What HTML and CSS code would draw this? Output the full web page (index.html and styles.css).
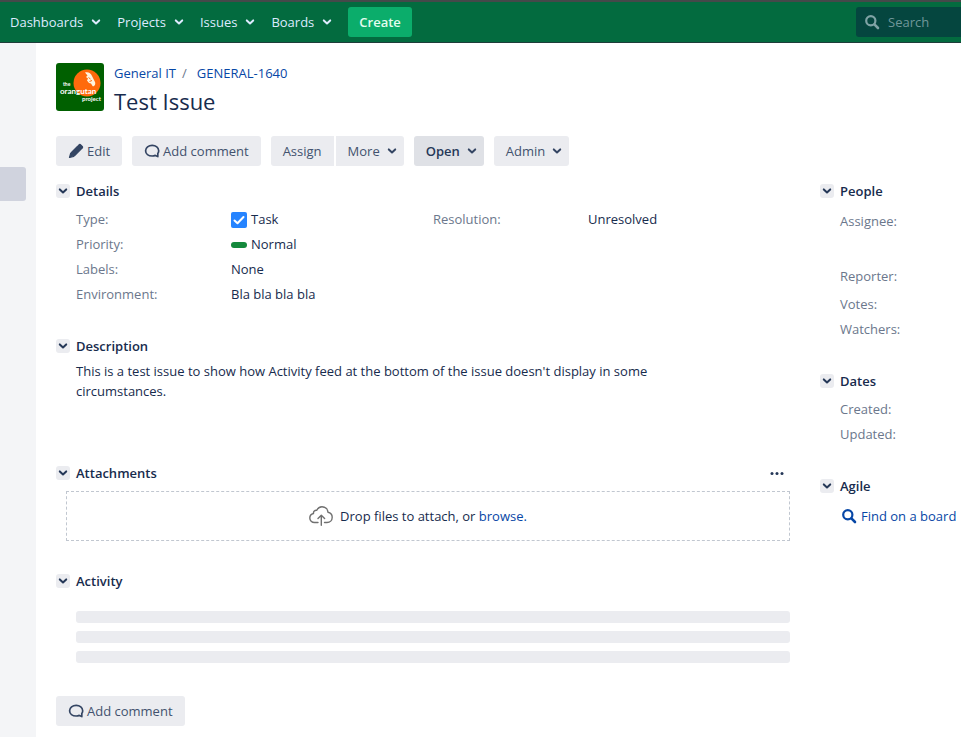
FILE: index.html
```html
<!DOCTYPE html>
<html lang="en">
<head>
  <meta charset="UTF-8">
  <meta name="viewport" content="width=device-width, initial-scale=1.0">
  <title>[GENERAL-1640] Test Issue</title>
  <link rel="stylesheet" href="styles.css">
</head>
<body>
  <!-- shared icons -->
  <svg class="sprite" aria-hidden="true">
    <symbol id="chevron" viewBox="0 0 10 8"><path d="M1.800 2.400L5 5.400L8.200 2.400" fill="none" stroke="currentColor" stroke-width="2" stroke-linecap="round" stroke-linejoin="round"/></symbol>
    <symbol id="search" viewBox="0 0 16 16"><circle cx="6.800" cy="6.800" r="4.600" fill="none" stroke="currentColor" stroke-width="2.200"/><path d="M10.400 10.400L14 14" stroke="currentColor" stroke-width="2.600" stroke-linecap="round"/></symbol>
    <symbol id="comment" viewBox="0 0 16 16"><path d="M13.800 13.600V10.400C14.400 9.600 14.700 8.700 14.700 7.700C14.700 4.500 11.800 2.300 8.200 2.300S1.600 4.500 1.600 7.700S4.500 13 8.200 13C9.300 13 10.400 12.800 11.300 12.400Z" fill="none" stroke="currentColor" stroke-width="1.700" stroke-linejoin="round"/></symbol>
  </svg>

  <header class="header">
    <nav class="nav">
      <a href="#">Dashboards <svg class="chevron"><use href="#chevron"/></svg></a>
      <a href="#">Projects <svg class="chevron"><use href="#chevron"/></svg></a>
      <a href="#">Issues <svg class="chevron"><use href="#chevron"/></svg></a>
      <a href="#">Boards <svg class="chevron"><use href="#chevron"/></svg></a>
    </nav>
    <button class="create">Create</button>
    <label class="search">
      <svg class="icon"><use href="#search"/></svg>
      <input type="text" placeholder="Search" aria-label="Search">
    </label>
  </header>

  <div class="page">
    <aside class="sidebar"><a class="sidebar-item" href="#" aria-label="Issues"></a></aside>

    <div class="content">
      <div class="issue-header">
        <svg class="project-logo" viewBox="0 0 48 48" role="img" aria-label="the orangutan project">
          <rect width="48" height="48" fill="#006000"/>
          <circle cx="31" cy="20" r="13.500" fill="#ff6a0c"/>
          <path d="M29 9.500C32 8.500 35 10 36 13L39 19C40 21.500 38 24 36.500 23L35 20.500L33 20L31 17.500L32 15.500L30 14L31.500 12.500Z" fill="#fff3df"/>
          <path d="M32.500 14.500L34.500 16M33.500 18.500L36 17.500" stroke="#ff6a0c" stroke-width="1"/>
          <text x="7" y="23" font-size="5">the</text>
          <text x="4" y="31" font-size="8">orangutan</text>
          <text x="26" y="38" font-size="6">project</text>
        </svg>
        <div>
          <div class="breadcrumbs"><a href="#">General IT</a><span>/</span><a href="#">GENERAL-1640</a></div>
          <h1>Test Issue</h1>
        </div>
      </div>

      <div class="toolbar">
        <button class="btn"><svg class="icon" viewBox="0 0 16 16"><path d="M1.500 14.500L2.700 10.200L5.800 13.300ZM3.500 9.300L9.200 3.600L12.400 6.800L6.700 12.500ZM10 2.800L11 1.800C11.500 1.300 12.200 1.300 12.700 1.800L14.200 3.300C14.700 3.800 14.700 4.500 14.200 5L13.200 6Z" fill="currentColor" stroke="currentColor" stroke-width="1.200" stroke-linejoin="round"/></svg>Edit</button>
        <button class="btn"><svg class="icon"><use href="#comment"/></svg>Add comment</button>
        <div class="btn-group">
          <button class="btn">Assign</button>
          <button class="btn">More <svg class="chevron"><use href="#chevron"/></svg></button>
        </div>
        <button class="btn btn-status">Open <svg class="chevron"><use href="#chevron"/></svg></button>
        <button class="btn">Admin <svg class="chevron"><use href="#chevron"/></svg></button>
      </div>

      <div class="columns">
        <main>
          <section class="details">
            <h2><button class="toggle" aria-label="Toggle Details"><svg class="chevron"><use href="#chevron"/></svg></button>Details</h2>
            <div class="details-body">
              <dl>
                <dt>Type:</dt>
                <dd><svg class="icon" viewBox="0 0 16 16"><rect width="16" height="16" rx="2" fill="#2684ff"/><path d="M3.500 8.500L6.500 11.300L12.500 5" fill="none" stroke="#fff" stroke-width="2" stroke-linecap="round" stroke-linejoin="round"/></svg>Task</dd>
                <dt>Priority:</dt>
                <dd><svg class="icon" viewBox="0 0 16 16"><rect y="5" width="16" height="6" rx="3" fill="#14893c"/></svg>Normal</dd>
                <dt>Labels:</dt>
                <dd>None</dd>
                <dt>Environment:</dt>
                <dd>Bla bla bla bla</dd>
              </dl>
              <dl>
                <dt>Resolution:</dt>
                <dd>Unresolved</dd>
              </dl>
            </div>
          </section>

          <section class="description">
            <h2><button class="toggle" aria-label="Toggle Description"><svg class="chevron"><use href="#chevron"/></svg></button>Description</h2>
            <p>This is a test issue to show how Activity feed at the bottom of the issue doesn't display in some circumstances.</p>
          </section>

          <section class="attachments">
            <h2><button class="toggle" aria-label="Toggle Attachments"><svg class="chevron"><use href="#chevron"/></svg></button>Attachments
              <button class="more" aria-label="Attachment options"><svg class="icon" viewBox="0 0 16 16" fill="currentColor"><circle cx="3" cy="8.500" r="1.500"/><circle cx="8" cy="8.500" r="1.500"/><circle cx="13" cy="8.500" r="1.500"/></svg></button>
            </h2>
            <div class="dropzone">
              <svg class="upload" viewBox="0 0 24 20" fill="none" stroke="#707070" stroke-width="1.400" stroke-linecap="round" stroke-linejoin="round"><path d="M9 16.500H5.500C2.800 16.500 .8 14.500 .8 12S2.500 8 4.500 7.500C4.200 5.500 5.800 4 7.800 4.300C8.800 2.200 10.700 .8 13 .8C16.300 .8 18.800 3.200 19 6.200C21.500 6.700 23.200 8.800 23.200 11.300C23.200 14.200 21 16.500 18 16.500H15.500M12.300 19.200V9.500M9 12.600L12.300 9.300L15.600 12.600"/></svg>
              <span>Drop files to attach, or <a href="#">browse.</a></span>
            </div>
          </section>

          <section class="activity">
            <h2><button class="toggle" aria-label="Toggle Activity"><svg class="chevron"><use href="#chevron"/></svg></button>Activity</h2>
            <div class="skeleton"><div></div><div></div><div></div></div>
          </section>

          <button class="btn"><svg class="icon"><use href="#comment"/></svg>Add comment</button>
        </main>

        <aside class="side">
          <section class="people">
            <h2><button class="toggle" aria-label="Toggle People"><svg class="chevron"><use href="#chevron"/></svg></button>People</h2>
            <dl>
              <dt class="person">Assignee:</dt>
              <dt class="reporter">Reporter:</dt>
              <dt>Votes:</dt>
              <dt>Watchers:</dt>
            </dl>
          </section>
          <section class="dates">
            <h2><button class="toggle" aria-label="Toggle Dates"><svg class="chevron"><use href="#chevron"/></svg></button>Dates</h2>
            <dl>
              <dt>Created:</dt>
              <dt>Updated:</dt>
            </dl>
          </section>
          <section>
            <h2><button class="toggle" aria-label="Toggle Agile"><svg class="chevron"><use href="#chevron"/></svg></button>Agile</h2>
            <a class="find" href="#"><svg class="icon"><use href="#search"/></svg>Find on a board</a>
          </section>
        </aside>
      </div>
    </div>
  </div>
</body>
</html>
```

FILE: styles.css
```css
* {
  box-sizing: border-box;
}
body {
  margin: 0;
  min-height: 100vh;
  display: flex;
  flex-direction: column;
  overflow-x: hidden;
  background: #fff;
  color: #172b4d;
  font: 13px/20px 'Segoe UI', 'Open Sans', sans-serif;
}
a {
  color: #0747a6;
  text-decoration: none;
}
h1, h2, p, dl, dd {
  margin: 0;
}
button, input {
  font: inherit;
}
button {
  border: 0;
  cursor: pointer;
}
svg {
  flex-shrink: 0;
}
.sprite {
  position: absolute;
  width: 0;
  height: 0;
}
.chevron {
  width: 10px;
  height: 8px;
}
.icon {
  width: 16px;
  height: 16px;
}

/* top bar */
.header {
  display: flex;
  align-items: center;
  height: 43px;
  padding-left: 10px;
  border-top: 2px solid #45494a;
  border-bottom: 1px solid #1f3d3a;
  background: #036b3f;
}
.nav {
  display: flex;
  gap: 16px;
}
.nav a {
  display: flex;
  align-items: center;
  gap: 8px;
  color: #deebff;
}
.create {
  height: 30px;
  margin-left: 16px;
  padding: 0 11px;
  border-radius: 3px;
  background: #0bad6b;
  color: #e3fcef;
  font-weight: 600;
}
.search {
  display: flex;
  align-items: center;
  gap: 8px;
  width: 105px;
  height: 30px;
  margin-left: auto;
  padding-left: 8px;
  border-radius: 3px 0 0 3px;
  background: #05463f;
  color: #7fa3a5;
}
.search input {
  width: 100%;
  min-width: 0;
  padding: 0;
  border: 0;
  outline: 0;
  background: none;
  color: inherit;
}
.search input::placeholder {
  color: #6f979a;
  opacity: 1;
}

/* page frame */
.page {
  flex: 1;
  display: flex;
}
.sidebar {
  width: 36px;
  flex-shrink: 0;
  padding-top: 124px;
  background: #f4f5f7;
}
.sidebar-item {
  display: block;
  width: 26px;
  height: 34px;
  border-radius: 0 3px 3px 0;
  background: #d0d3de;
}
.content {
  flex: 1;
  min-width: 0;
  padding: 20px 0 11px 20px;
}

/* issue heading */
.issue-header {
  display: flex;
  gap: 10px;
}
.project-logo {
  width: 48px;
  height: 48px;
  border-radius: 3px;
}
.project-logo text {
  fill: #fff;
  font-family: Lato, sans-serif;
  font-weight: 700;
}
.breadcrumbs span {
  padding: 0 10px 0 6px;
  color: #6b778c;
}
h1 {
  margin-top: 4px;
  font-size: 22px;
  font-weight: 500;
  line-height: 28px;
}
.toolbar {
  display: flex;
  gap: 10px;
  margin: 21px 0 15px;
}
.btn {
  display: inline-flex;
  align-items: center;
  gap: 3px;
  height: 30px;
  padding: 0 12px;
  border-radius: 3px;
  background: #ebecf0;
  color: #42526e;
  white-space: nowrap;
}
.btn .icon {
  color: #344563;
}
.btn .chevron {
  margin-left: 4px;
  margin-right: -5px;
  color: #344563;
}
.btn-group {
  display: flex;
  gap: 2px;
}
.btn-group .btn:first-child {
  border-radius: 3px 0 0 3px;
}
.btn-group .btn:last-child {
  border-radius: 0 3px 3px 0;
}
.btn-status {
  background: #dfe1e6;
  color: #253858;
  font-weight: 600;
}

/* modules */
.columns {
  display: grid;
  grid-template-columns: minmax(0, 1fr) 141px;
  gap: 30px;
}
h2 {
  display: flex;
  align-items: center;
  gap: 6px;
  font-size: 13px;
  font-weight: 600;
  line-height: 20px;
}
.toggle {
  display: flex;
  align-items: center;
  justify-content: center;
  width: 14px;
  height: 14px;
  padding: 0;
  border-radius: 3px;
  background: #ebecf0;
  color: #253858;
}
dt {
  color: #6b778c;
}
.details-body {
  display: grid;
  grid-template-columns: 1fr 1fr;
  padding: 6px 0 0 20px;
}
.details dl {
  display: grid;
  grid-template-columns: 155px 1fr;
  align-content: start;
  line-height: 25px;
}
.details dd {
  display: flex;
  align-items: center;
  gap: 4px;
}
.description {
  margin-top: 29px;
}
.description p {
  padding: 5px 90px 0 20px;
}
.attachments {
  margin-top: 62px;
}
.more {
  display: flex;
  margin-left: auto;
  padding: 0 5px;
  background: none;
  color: #253858;
}
.dropzone {
  display: flex;
  align-items: center;
  justify-content: center;
  gap: 7px;
  height: 50px;
  margin: 8px 0 0 10px;
  padding-right: 20px;
  border: 1px dashed #c1c7d0;
}
.upload {
  width: 24px;
  height: 20px;
}
.activity {
  margin: 30px 0 33px;
}
.skeleton {
  display: grid;
  gap: 8px;
  padding: 20px 0 0 20px;
}
.skeleton div {
  height: 12px;
  border-radius: 3px;
  background: #ebecf0;
}

/* right column */
.side dl {
  padding: 6px 0 0 20px;
  line-height: 25px;
}
.people .person {
  padding: 2px 0 30px;
}
.people .reporter {
  padding-bottom: 3px;
}
.people, .dates {
  margin-bottom: 29px;
}
.find {
  display: flex;
  align-items: center;
  gap: 4px;
  padding: 10px 0 0 21px;
  white-space: nowrap;
}
```
